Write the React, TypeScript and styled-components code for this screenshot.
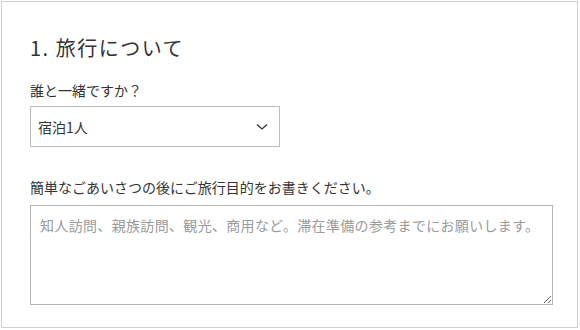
import React from "react";
import styled, { createGlobalStyle } from "styled-components";

const GlobalStyle = createGlobalStyle`
  html, body { margin: 0; padding: 0; background: #fff; }
  body { font-family: "Noto Sans CJK JP", "Noto Sans", sans-serif; color: #333; }
  * { box-sizing: border-box; }
`;

const Panel = styled.section`
  margin: 1px;
  width: 577px;
  height: 327px;
  border: 1px solid #cfcfcf;
  padding: 31px 0 0 28px;
  display: flex;
  flex-direction: column;
`;

const Title = styled.h2`
  margin: 0;
  font-size: 20px;
  line-height: 30px;
  font-weight: 400;
  letter-spacing: 1.5px;
  color: #333;
`;

const Label = styled.label<{ $gap: number }>`
  display: block;
  margin-top: ${(p) => p.$gap}px;
  font-size: 14px;
  line-height: 20px;
  color: #333;
`;

const SelectBox = styled.div`
  margin-top: 6px;
  width: 250px;
  height: 41px;
  border: 1px solid #bdbdbd;
  padding: 0 11px 0 7px;
  display: flex;
  align-items: center;
  justify-content: space-between;
  font-size: 14px;
  color: #333;
`;

const TextArea = styled.textarea`
  margin-top: 8px;
  width: 523px;
  height: 100px;
  border: 1px solid #b5b5b5;
  padding: 9px 9px;
  font-family: "Noto Sans CJK JP", sans-serif;
  font-size: 14px;
  line-height: 20px;
  letter-spacing: 0.33px;
  color: #333;
  resize: both;
  outline: none;
  &::placeholder { color: #9a9a9a; }
`;

export default function App() {
  return (
    <>
      <GlobalStyle />
      <Panel>
        <Title>1. 旅行について</Title>
        <Label $gap={17}>誰と一緒ですか？</Label>
        <SelectBox>
          <span>宿泊1人</span>
          <svg width="12" height="8" viewBox="0 0 12 8" fill="none">
            <path d="M1 1.5 L6 6 L11 1.5" stroke="#333" strokeWidth="1.3" />
          </svg>
        </SelectBox>
        <Label $gap={30}>簡単なごあいさつの後にご旅行目的をお書きください。</Label>
        <TextArea placeholder="知人訪問、親族訪問、観光、商用など。滞在準備の参考までにお願いします。" />
      </Panel>
    </>
  );
}
